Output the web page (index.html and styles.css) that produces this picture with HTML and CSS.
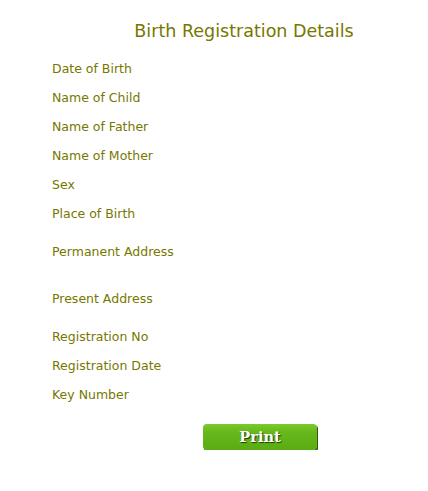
FILE: index.html
```html
<!DOCTYPE html>
<html>
<head>
<meta charset="utf-8">
<link rel="stylesheet" href="styles.css">
</head>
<body>
<div class="page">
  <h1 class="title">Birth Registration Details</h1>
  <div class="details">
    <div class="row">Date of Birth</div>
    <div class="row">Name of Child</div>
    <div class="row">Name of Father</div>
    <div class="row">Name of Mother</div>
    <div class="row">Sex</div>
    <div class="row">Place of Birth</div>
    <div class="row tall">Permanent Address</div>
    <div class="row taller">Present Address</div>
    <div class="row">Registration No</div>
    <div class="row">Registration Date</div>
    <div class="row">Key Number</div>
  </div>
  <div class="actions">
    <button class="print">Print</button>
  </div>
</div>
</body>
</html>
```
FILE: styles.css
```css
html, body {
  margin: 0;
  padding: 0;
  background: #ffffff;
}
.page {
  width: 428px;
  font-family: "DejaVu Sans", Verdana, sans-serif;
  color: #777700;
}
.title {
  margin: 0;
  padding: 20px 0 0 60px;
  height: 34px;
  box-sizing: content-box;
  text-align: center;
  font-size: 17.5px;
  font-weight: normal;
  line-height: 22px;
}
.details {
  display: flex;
  flex-direction: column;
  padding-left: 52px;
}
.row {
  height: 29px;
  display: flex;
  align-items: center;
  font-size: 12.5px;
}
.row.tall {
  height: 46px;
}
.row.taller {
  height: 48px;
}
.actions {
  padding: 15px 0 0 203px;
}
.print {
  display: block;
  width: 114px;
  height: 26px;
  margin-top: 0;
  padding: 0 0 1px 0;
  border: none;
  border-radius: 4px;
  background: linear-gradient(#7acb2c 0%, #66b81c 30%, #5aac14 100%);
  box-shadow: 1px 1px 0 #2e5a0c, 1px 2px 0 #3d6e14;
  color: #ffffff;
  font-family: "DejaVu Serif", Georgia, serif;
  font-weight: bold;
  font-size: 14.5px;
  text-shadow: 1px 1px 1px #1f3a08;
  cursor: pointer;
}
```
